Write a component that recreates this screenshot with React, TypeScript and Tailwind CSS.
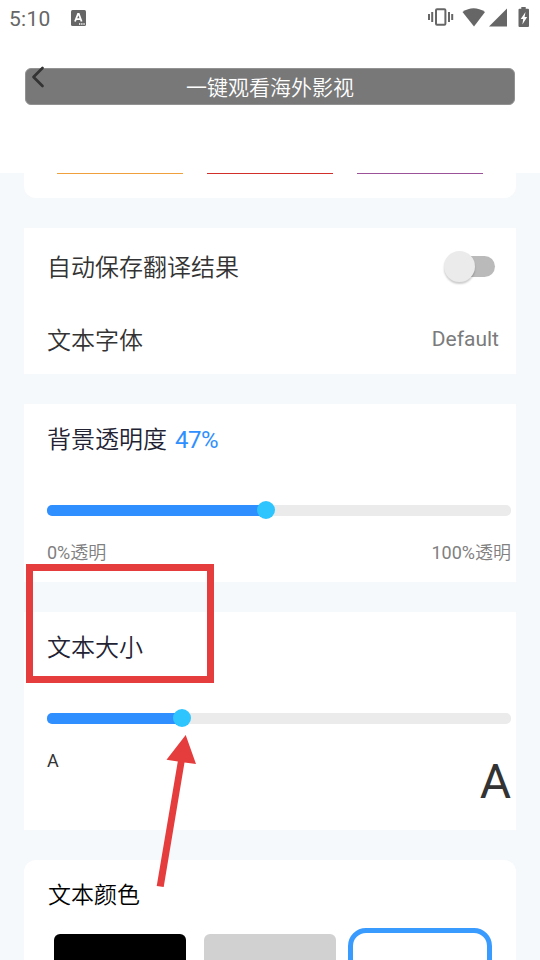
import type { ReactNode } from 'react'

interface SliderProps {
  value: number
}

const SWATCHES = ['bg-black', 'bg-[#d1d1d1]']

const LANG_TABS = [
  { id: 'orange', color: 'bg-[#f0a03c]' },
  { id: 'red', color: 'bg-[#d32f2a]' },
  { id: 'purple', color: 'bg-[#9c5299]' },
]

function StatusBar() {
  return (
    <div className="flex h-9 items-center justify-between pl-[9px] pr-[10px] text-[#666666]">
      <div className="flex items-center">
        <span className="w-[62px] pt-[2px] text-[21px] leading-[34px] tracking-[0.3px]">5:10</span>
        <svg width="15" height="16" viewBox="0 0 15 16">
          <rect width="15" height="16" rx="1.5" fill="currentColor" />
          <path d="M4 11.5 L7 4 H7.8 L10.6 11.5 M5.3 9.2 H9.3" fill="none" stroke="#fff" strokeWidth="1.8" />
          <path d="M8 14 H9.3 M10.2 14 H11.5 M12.4 14 H13.7" stroke="#fff" strokeWidth="1.4" />
        </svg>
      </div>
      <svg className="mb-[2px]" width="103" height="20" viewBox="0 0 103 20" fill="currentColor">
        <rect x="9" y="2.2" width="9.4" height="15.6" rx="1" fill="none" stroke="currentColor" strokeWidth="2" />
        <path d="M1 7h2v6H1z M4.2 5h2v10h-2z M21 5h2v10h-2z M24.2 7h2v6h-2z" />
        <path d="M35.5 5Q46.5 -2.5 58 5L47 19.4z" />
        <path d="M80 1.5v18H62z" />
        <path d="M94.3 0H98.7V1.8H101Q102 1.8 102 2.8V19Q102 20 101 20H92.5Q91.5 20 91.5 19V2.8Q91.5 1.8 92.5 1.8H94.3z" />
        <path d="M98.5 5l-4.8 7h2.5l-.8 5.5 4.8-7.5h-2.6z" fill="#fff" />
      </svg>
    </div>
  )
}

function Header() {
  return (
    <header className="h-[173px] shrink-0 bg-white">
      <StatusBar />
      <div className="relative mx-[25px] mt-8 flex h-[37px] items-center justify-center rounded-[6px] border border-[#929292] bg-[#787878]">
        <svg className="absolute top-[-3px] left-[5px]" width="14" height="22" viewBox="0 0 14 22">
          <path d="M11.5 2 L2.5 11 L11.5 20" fill="none" stroke="#333333" strokeWidth="2.7" strokeLinecap="round" strokeLinejoin="round" />
        </svg>
        <h1 className="pt-1 text-[21px] leading-[37px] font-[350] text-white">一键观看海外影视</h1>
      </div>
    </header>
  )
}

function Slider({ value }: SliderProps) {
  return (
    <div className="relative h-[11px] rounded-[5px] bg-[#ebebeb]">
      <div className="h-full rounded-l-[5px] bg-[#2f8fff]" style={{ width: `${value}%` }} />
      <div
        className="absolute top-[-4px] h-[18px] w-[18px] -translate-x-1/2 rounded-full bg-[#2ec5ff]"
        style={{ left: `${value}%` }}
      />
    </div>
  )
}

function Card({ className, children }: { className: string; children: ReactNode }) {
  return <section className={`mx-6 shrink-0 bg-white ${className}`}>{children}</section>
}

export default function App() {
  return (
    <div className="relative flex h-[960px] w-[540px] flex-col overflow-hidden bg-[#f5f9fc] font-['Roboto','Noto_Sans_CJK_SC',sans-serif] text-[#333333]">
      <Header />

      <Card className="mb-[30px] flex h-[25px] gap-6 rounded-b-[12px] pl-[33px]">
        {LANG_TABS.map(tab => (
          <div key={tab.id} className={`h-px w-[126px] ${tab.color}`} />
        ))}
      </Card>

      <Card className="mb-[30px] h-[146px] pl-[23px]">
        <div className="flex h-[77px] items-center justify-between pr-[21px]">
          <span className="pt-[2px] text-[24px] leading-9 font-[350]">自动保存翻译结果</span>
          <div className="relative h-[21px] w-[44px] rounded-full bg-[#bababa]">
            <div className="absolute top-[-5px] left-[-7px] h-[31px] w-[31px] rounded-full bg-[#ebebeb] shadow-[0_2px_2px_rgba(0,0,0,0.2)]" />
          </div>
        </div>
        <div className="flex h-[69px] items-center justify-between pr-[17px]">
          <span className="pt-[2px] text-[24px] leading-9 font-[350]">文本字体</span>
          <span className="pb-[2px] text-[21px] leading-9 text-[#7b7b7b]">Default</span>
        </div>
      </Card>

      <Card className="mb-[30px] h-[178px] pt-[18px] pr-[5px] pl-[23px]">
        <div className="mb-[47px] flex h-9 items-center gap-2 text-[24px] leading-9">
          <span className="font-[350] text-[#222233]">背景透明度</span>
          <span className="tracking-[-0.5px] text-[#2f8fff]">47%</span>
        </div>
        <Slider value={47.1} />
        <div className="mt-[23px] flex justify-between text-[18px] leading-7 text-[#808080]">
          <span>0%<span className="font-[350]">透明</span></span>
          <span>100%<span className="font-[350]">透明</span></span>
        </div>
      </Card>

      <Card className="mb-[30px] h-[218px] pt-[18px] pr-[5px] pl-[23px]">
        <div className="mb-[47px] h-9 text-[24px] leading-9 font-[350] text-[#222233]">文本大小</div>
        <Slider value={29.2} />
        <div className="mt-[26px] flex justify-between">
          <span className="text-[18px] leading-[22px]">A</span>
          <span className="pt-1 text-[48px] leading-[56px]">A</span>
        </div>
      </Card>

      <Card className="h-[160px] rounded-t-[12px] pt-[18px] pl-6">
        <div className="h-9 text-[23px] leading-9 font-[350] text-black">文本颜色</div>
        <div className="mt-[14px] flex pl-[6px]">
          {SWATCHES.map(color => (
            <div key={color} className={`mt-[6px] mr-[18px] h-[60px] w-[132px] rounded-[6px] ${color}`} />
          ))}
          <div className="-ml-[6px] h-[72px] w-[144px] rounded-[18px] border-[5px] border-[#3a9bff] bg-white" />
        </div>
      </Card>

      {/* tutorial callouts drawn above the page */}
      <div className="absolute top-[564px] left-[26px] h-[119px] w-[188px] border-[7px] border-[#e53d3d]" />
      <svg className="absolute top-[734px] left-[154px]" width="44" height="156" viewBox="0 0 44 156">
        <path d="M31.7 1 L42 30 L30.5 28.5 L9.7 153 L2.7 152 L23.8 27.4 L12.5 25.7 Z" fill="#e53d3d" />
      </svg>
    </div>
  )
}
